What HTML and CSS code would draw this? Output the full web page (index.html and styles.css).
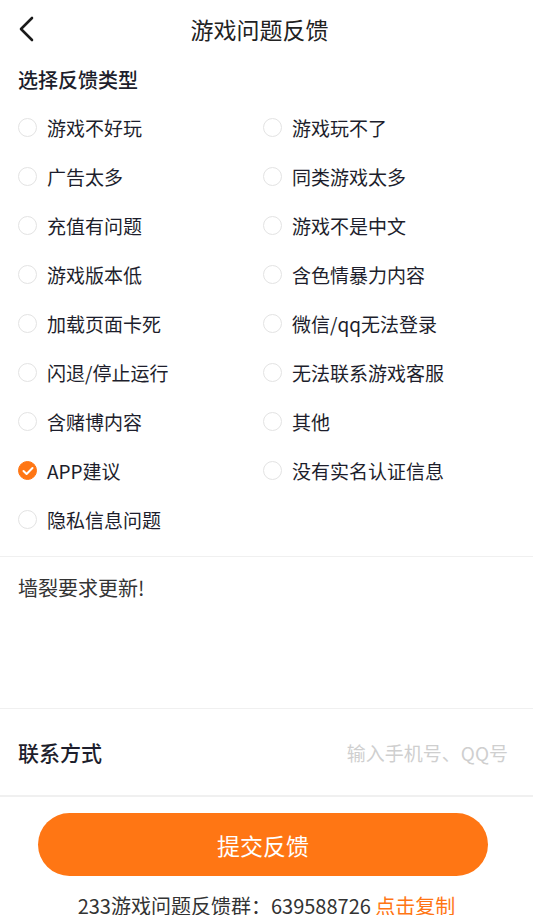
FILE: index.html
```html
<!DOCTYPE html>
<html lang="zh-CN">
<head>
    <meta charset="UTF-8">
    <meta name="viewport" content="width=device-width, initial-scale=1.0">
    <title>游戏问题反馈</title>
    <link rel="stylesheet" href="styles.css">
</head>
<body>
    <div class="header">
        <span class="back">
            <svg width="18" height="26" viewBox="0 0 18 26"><path d="M14 2 L3 13 L14 24" fill="none" stroke="#1a1a1a" stroke-width="2.6" stroke-linecap="round" stroke-linejoin="round"/></svg>
        </span>
        <h1>游戏问题反馈</h1>
    </div>

    <h2 class="section-title">选择反馈类型</h2>
    <div class="options">
        <label class="option"><span class="radio"></span>游戏不好玩</label>
        <label class="option"><span class="radio"></span>游戏玩不了</label>
        <label class="option"><span class="radio"></span>广告太多</label>
        <label class="option"><span class="radio"></span>同类游戏太多</label>
        <label class="option"><span class="radio"></span>充值有问题</label>
        <label class="option"><span class="radio"></span>游戏不是中文</label>
        <label class="option"><span class="radio"></span>游戏版本低</label>
        <label class="option"><span class="radio"></span>含色情暴力内容</label>
        <label class="option"><span class="radio"></span>加载页面卡死</label>
        <label class="option"><span class="radio"></span>微信/qq无法登录</label>
        <label class="option"><span class="radio"></span>闪退/停止运行</label>
        <label class="option"><span class="radio"></span>无法联系游戏客服</label>
        <label class="option"><span class="radio"></span>含赌博内容</label>
        <label class="option"><span class="radio"></span>其他</label>
        <label class="option"><span class="radio checked">
            <svg width="12" height="10" viewBox="0 0 12 10"><path d="M1.5 5 L4.6 8 L10.5 2" fill="none" stroke="#fff" stroke-width="2" stroke-linecap="round" stroke-linejoin="round"/></svg>
        </span>APP建议</label>
        <label class="option"><span class="radio"></span>没有实名认证信息</label>
        <label class="option"><span class="radio"></span>隐私信息问题</label>
    </div>

    <div class="message">墙裂要求更新!</div>

    <div class="contact">
        <span class="contact-label">联系方式</span>
        <span class="contact-input">输入手机号、QQ号</span>
    </div>

    <div class="submit-wrap">
        <button class="submit">提交反馈</button>
    </div>
    <p class="group">233游戏问题反馈群：639588726 <span class="copy">点击复制</span></p>
</body>
</html>
```

FILE: styles.css
```css
body {
    margin: 0;
    font-family: "Noto Sans CJK SC", "Noto Sans", sans-serif;
    background: #fff;
    color: #1d1e2c;
}
.header {
    height: 58px;
    display: flex;
    align-items: center;
    justify-content: center;
    padding-right: 14px;
    position: relative;
}
.back {
    position: absolute;
    left: 18px;
    top: 16px;
}
.header h1 {
    margin: 0;
    font-size: 23px;
    font-weight: 400;
    color: #222;
}
.section-title {
    margin: 0;
    padding: 8px 18px 0;
    height: 37px;
    line-height: 28px;
    font-size: 20px;
    font-weight: 500;
    box-sizing: border-box;
}
.options {
    display: grid;
    grid-template-columns: 245px 1fr;
    grid-auto-rows: 49px;
    padding: 8px 18px 12px;
    border-bottom: 1px solid #f0f0f0;
}
.option {
    display: flex;
    align-items: center;
    font-size: 19px;
}
.radio {
    width: 17px;
    height: 17px;
    border: 1.5px solid #e3e3e3;
    border-radius: 50%;
    margin-right: 10px;
    display: flex;
    align-items: center;
    justify-content: center;
}
.radio.checked {
    background: #ff7614;
    border-color: #ff7614;
}
.message {
    height: 152px;
    padding: 16px 18px 0;
    box-sizing: border-box;
    font-size: 20px;
    color: #333;
    border-bottom: 1px solid #f0f0f0;
}
.contact {
    height: 86px;
    display: flex;
    align-items: center;
    justify-content: space-between;
    padding: 0 25px 0 18px;
    border-bottom: 2px solid #f0f0f0;
}
.contact-label {
    font-size: 21px;
    font-weight: 500;
}
.contact-input {
    font-size: 19px;
    color: #cfcfcf;
}
.submit-wrap {
    padding: 16px 45px 0 38px;
}
.submit {
    width: 100%;
    height: 63px;
    border: none;
    border-radius: 32px;
    background: #ff7614;
    color: #fff;
    font-family: inherit;
    font-size: 23px;
}
.group {
    margin: 18px 0 0;
    line-height: 24px;
    text-align: center;
    font-size: 20px;
    color: #333;
}
.copy {
    color: #ff7614;
}
```
